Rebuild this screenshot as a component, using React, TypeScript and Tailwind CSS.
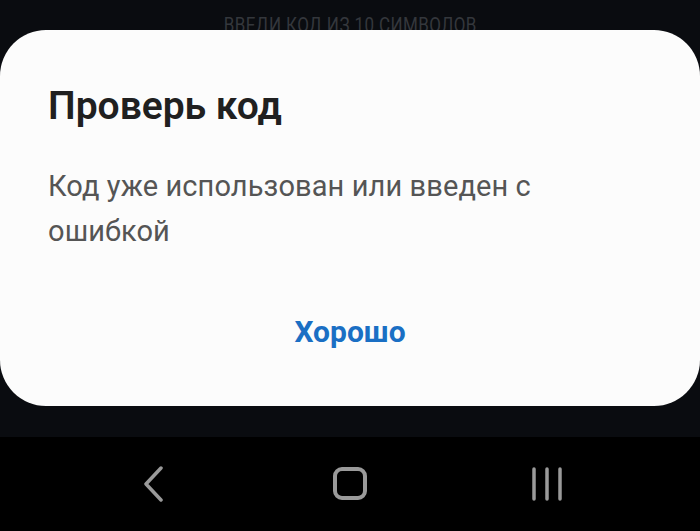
import React from 'react';

export default function App() {
  return (
    <div className="flex flex-col w-[700px] h-[531px] bg-[#0a0c10] overflow-hidden font-['Roboto',sans-serif]">
      {/* header partly covered by the dialog */}
      <div className="h-[30px] overflow-hidden flex justify-center">
        <span className="mt-[13px] text-[21px] leading-[24px] text-[#34373c] tracking-[0.5px] scale-x-[0.81] origin-center whitespace-nowrap">
          ВВЕДИ КОД ИЗ 10 СИМВОЛОВ
        </span>
      </div>

      <div className="h-[376px] rounded-[46px] bg-[#fcfcfc] px-[48px] pt-[53px] flex flex-col">
        <h1 className="text-[39px] leading-[47px] font-semibold text-[#202020] tracking-[0px]">Проверь код</h1>
        <p className="mt-[34px] text-[29px] leading-[45px] text-[#555555] tracking-[0.1px]">
          Код уже использован или введен с ошибкой
        </p>
        <div className="mt-[57px] flex justify-center">
          <button className="text-[30px] leading-[42px] font-bold text-[#1a6fc4]">Хорошо</button>
        </div>
      </div>

      <div className="h-[31px]" />

      <div className="flex-1 bg-black flex items-center pl-[134px] pb-[1px]">
        <div className="flex items-center gap-[156px]">
          <div className="w-[40px] flex justify-center">
            <svg width="20" height="36" viewBox="0 0 20 36">
              <polyline points="17,2 2,18 17,34" fill="none" stroke="#9a9a9a" strokeWidth="3.5" strokeLinecap="round" strokeLinejoin="round" />
            </svg>
          </div>
          <div className="w-[40px] flex justify-center">
            <div className="w-[34px] h-[33px] rounded-[9px] border-[4px] border-[#9a9a9a]" />
          </div>
          <div className="w-[40px] flex justify-center ml-[1px]">
            <svg width="32" height="34" viewBox="0 0 32 34">
              <line x1="3" y1="2" x2="3" y2="32" stroke="#9a9a9a" strokeWidth="3.5" strokeLinecap="round" />
              <line x1="16" y1="2" x2="16" y2="32" stroke="#9a9a9a" strokeWidth="3.5" strokeLinecap="round" />
              <line x1="29" y1="2" x2="29" y2="32" stroke="#9a9a9a" strokeWidth="3.5" strokeLinecap="round" />
            </svg>
          </div>
        </div>
      </div>
    </div>
  );
}
